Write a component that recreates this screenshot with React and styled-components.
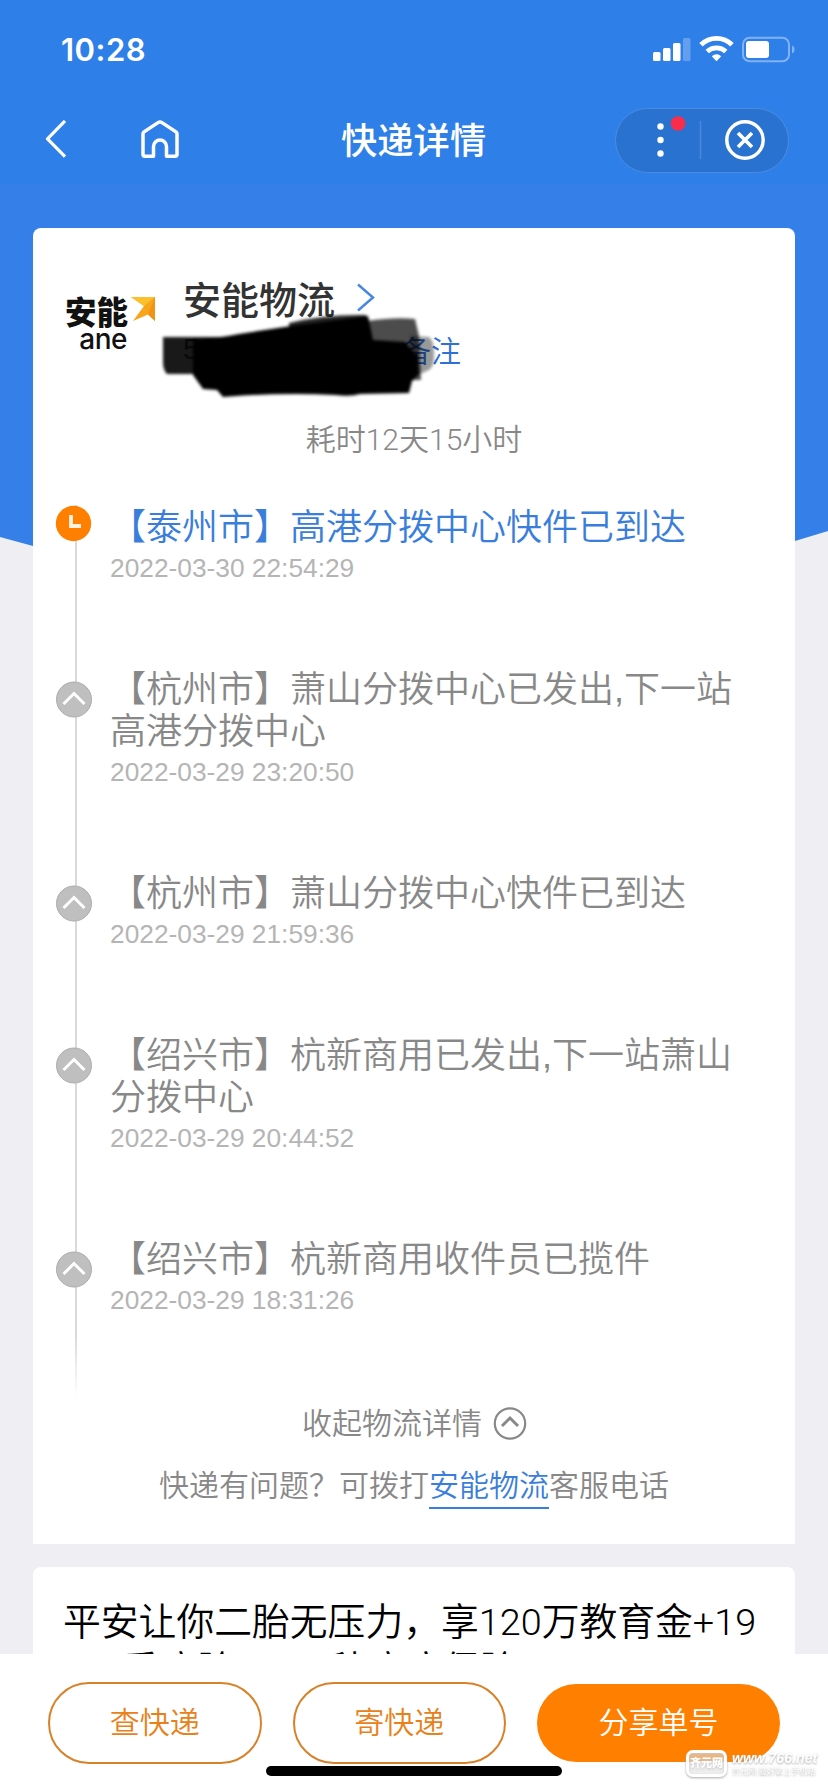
import React from "react";

import styled, { createGlobalStyle, css } from "styled-components";

const GlobalStyle = createGlobalStyle`
  * {
    box-sizing: border-box;
  }
  body {
    margin: 0;
    background-color: #eeeef3;
    font-family: "Liberation Sans", "Noto Sans CJK SC", sans-serif;
    font-weight: 350;
  }
`;
const Page = styled.div`
  position: relative;
  isolation: isolate;
  display: flex;
  flex-direction: column;
  width: 828px;
  height: 1792px;
  overflow: hidden;
`;
const Backdrop = styled.div`
  position: absolute;
  z-index: -1;
  top: 0;
  left: 0;
  width: 100%;
  height: 620px;
  background: linear-gradient(#2f7fe8 184px, #3480e8 184px);
  clip-path: polygon(0 0, 100% 0, 100% 531px, 795px 541px, 414px 620px, 33px 546px, 0 537px);
`;
const StatusBar = styled.div`
  display: flex;
  justify-content: space-between;
  align-items: center;
  height: 98px;
  padding: 0 32px 0 61px;
`;
const Clock = styled.div`
  color: white;
  font-family: Inter, sans-serif;
  font-size: 31px;
  font-weight: 600;
  line-height: 40px;
  letter-spacing: 0.5px;
  padding-top: 2px;
`;
const NavBar = styled.div`
  display: grid;
  grid-template-columns: 1fr 146px 1fr;
  align-items: center;
  height: 84px;
  padding: 0 39px 0 45px;
`;
const NavLeft = styled.div`
  display: flex;
  align-items: center;
  gap: 74px;
`;
const Title = styled.div`
  margin-left: -3px;
  padding-top: 4px;
  color: white;
  font-size: 36.3px;
  font-weight: 500;
  line-height: 48px;
  white-space: nowrap;
`;
const Capsule = styled.div`
  justify-self: end;
  display: flex;
  justify-content: flex-end;
  width: 174px;
  height: 65px;
  border-radius: 33px;
  border: 1px solid #4a8ce2;
  background-color: #2a72cf;
`;
const Card = styled.div`
  margin: ${(props) => props.$top}px 33px 0;
  height: ${(props) => props.$height}px;
  flex-shrink: 0;
  background-color: white;
  border-radius: 8px 8px 0 0;
  overflow: hidden;
`;
const Company = styled.div`
  display: flex;
  height: 190px;
  padding: 44px 0 0 32px;
`;
const Logo = styled.div`
  width: 118px;
  padding-top: 25px;
  color: #111;
`;
const LogoTop = styled.div`
  display: flex;
  gap: 3px;
  height: 32px;
`;
const LogoName = styled.div`
  font-size: 31.5px;
  font-weight: 900;
  line-height: 33px;
`;
const LogoLatin = styled.div`
  width: 62px;
  font-family: Inter, sans-serif;
  font-size: 28px;
  font-weight: 500;
  line-height: 20px;
  letter-spacing: -0.5px;
  text-align: right;
`;
const CompanyInfo = styled.div`
  position: relative;
  display: flex;
  flex-direction: column;
  gap: 4px;
`;
const CompanyName = styled.div`
  display: flex;
  align-items: center;
  gap: 21px;
  height: 50px;
  color: #333;
  font-size: 38px;
  font-weight: 500;
`;
const TrackingRow = styled.div`
  display: flex;
  justify-content: space-between;
  width: 278px;
  height: 46px;
  align-items: center;
  color: #555;
  font-size: 30px;
`;
const Remark = styled.span`
  color: #2c70d8;
`;
const Scribble = styled.svg`
  position: absolute;
  left: -28px;
  top: 32px;
`;
const Duration = styled.div`
  height: 87px;
  line-height: 44px;
  color: #888;
  font-family: Roboto, "Noto Sans CJK SC", sans-serif;
  font-size: 30px;
  text-align: center;
`;
const Timeline = styled.div`
  padding-left: 22px;
`;
const Item = styled.div`
  display: flex;
  padding-bottom: 78px;
  background: linear-gradient(#d9d9db, #d9d9db) 20px 0 / 2px 100% no-repeat;
  ${(props) =>
    props.$last &&
    css`
      background: linear-gradient(#d9d9db 60%, transparent) 20px 0 / 2px 100%
        no-repeat;
    `}
`;
const Marker = styled.div`
  width: 55px;
  padding-top: ${(props) => (props.$active ? 0 : 14)}px;
`;
const Step = styled.div`
  padding-top: 2px;
  margin-bottom: -2px;
  color: ${(props) => (props.$active ? "#3a7edc" : "#888")};
  font-size: 36px;
  line-height: 42px;
  white-space: pre-line;
`;
const Time = styled.div`
  color: #b5b5b5;
  font-size: 26.3px;
  line-height: 42px;
`;
const Collapse = styled.div`
  display: flex;
  justify-content: center;
  align-items: center;
  gap: 11px;
  height: 48px;
  padding-left: 1px;
  color: #888;
  font-size: 30px;
`;
const CollapseLabel = styled.span`
  padding-bottom: 5px;
`;
const Help = styled.div`
  padding-top: 18px;
  color: #888;
  font-size: 30px;
  line-height: 42px;
  text-align: center;
`;
const Phone = styled.span`
  display: inline-block;
  height: 44px;
  color: #3a7edc;
  border-bottom: 2px solid #3a7edc;
`;
const Ad = styled.div`
  padding: 31px 30px 0 30px;
  color: #000;
  font-family: Roboto, "Noto Sans CJK SC", sans-serif;
  font-size: 37.8px;
  line-height: 48px;
  white-space: pre;
`;
const Footer = styled.div`
  position: relative;
  display: flex;
  gap: 31px;
  height: 138px;
  flex-shrink: 0;
  padding: 28px 48px 0;
  background-color: white;
`;
const Button = styled.div`
  width: 213.5px;
  height: 82px;
  border: 2px solid #d98128;
  border-radius: 41px;
  color: #e8811a;
  font-size: 30px;
  line-height: 78px;
  text-align: center;
  ${(props) =>
    props.$primary &&
    css`
      width: 243px;
      height: 78px;
      margin-top: 2px;
      border: none;
      background-color: #ff7f00;
      color: white;
    `}
`;
const HomeIndicator = styled.div`
  position: absolute;
  left: 266px;
  bottom: 16px;
  width: 296px;
  height: 10px;
  border-radius: 5px;
  background-color: black;
`;
const Watermark = styled.div`
  position: absolute;
  left: 686px;
  top: 96px;
  display: flex;
  gap: 5px;
  color: white;
  filter: drop-shadow(0 1px 1px #aaa);
`;
const Bubble = styled.div`
  width: 41px;
  height: 27px;
  border: 3px solid white;
  border-radius: 7px;
  background-color: #ffffff55;
  font-size: 11px;
  font-weight: 900;
  line-height: 20px;
  text-align: center;
  white-space: nowrap;
`;
const Site = styled.div`
  width: 88px;
  font-size: 14px;
  font-style: italic;
  font-weight: 700;
  line-height: 16px;
  letter-spacing: 0.1px;
  white-space: nowrap;
`;
const SiteNote = styled.div`
  font-size: 8px;
  font-weight: 400;
  font-style: normal;
  line-height: 12px;
`;

const steps = [
  {
    text: "【泰州市】高港分拨中心快件已到达",
    time: "2022-03-30 22:54:29",
    active: true,
  },
  {
    text: "【杭州市】萧山分拨中心已发出,下一站\n高港分拨中心",
    time: "2022-03-29 23:20:50",
  },
  {
    text: "【杭州市】萧山分拨中心快件已到达",
    time: "2022-03-29 21:59:36",
  },
  {
    text: "【绍兴市】杭新商用已发出,下一站萧山\n分拨中心",
    time: "2022-03-29 20:44:52",
  },
  {
    text: "【绍兴市】杭新商用收件员已揽件",
    time: "2022-03-29 18:31:26",
  },
];

const StatusIcons = () => (
  <svg width="144" height="28" viewBox="0 0 144 28" fill="white">
    <rect x="1" y="17" width="7.5" height="9" rx="1.5" />
    <rect x="11" y="13" width="7.5" height="13" rx="1.5" />
    <rect x="21" y="8" width="7.5" height="18" rx="1.5" />
    <rect x="31" y="3" width="7.5" height="23" rx="1.5" opacity="0.25" />
    <g fill="none" stroke="white" strokeWidth="4.8">
      <path d="M49 9.8a22 22 0 0 1 31 0" />
      <path d="M55.2 16.5a13.5 13.5 0 0 1 18.6 0" />
    </g>
    <path d="M59.8 21.2a6.8 6.8 0 0 1 9.4 0L64.5 26.2z" />
    <rect x="91" y="2.8" width="46" height="23.4" rx="6.5" fill="none" stroke="#82b2f1" strokeWidth="2" />
    <rect x="94" y="6" width="23" height="17" rx="3" />
    <path d="M140 10.5v8c3.4-1.2 3.4-6.8 0-8z" fill="#82b2f1" />
  </svg>
);

const BackIcon = () => (
  <svg width="22" height="40" viewBox="0 0 22 40" fill="none" stroke="white" strokeWidth="3.2">
    <path d="M20 1L2.5 18.8L20 36.6" strokeLinejoin="round" />
  </svg>
);

const HomeIcon = () => (
  <svg width="38" height="40" viewBox="0 0 38 40" fill="none" stroke="white" strokeWidth="3.5" strokeLinejoin="round">
    <path d="M2 14Q2 12.6 3 11.9L17 2.6Q19 1.3 21 2.6L35 11.9Q36 12.6 36 14V34.5Q36 36.2 34.3 36.2H25.5V26.5a6.5 6.5 0 0 0-13 0V36.2H3.7Q2 36.2 2 34.5z" />
  </svg>
);

const CapsuleIcons = () => (
  <svg width="171" height="62" viewBox="0 0 171 62">
    <g fill="white">
      <circle cx="43.5" cy="17.5" r="3.2" />
      <circle cx="43.5" cy="31" r="3.2" />
      <circle cx="43.5" cy="44.5" r="3.2" />
    </g>
    <circle cx="61" cy="14.5" r="7.3" fill="#f92d4b" />
    <path d="M83.5 12v38" stroke="#4a88dc" strokeWidth="1.5" />
    <g fill="none" stroke="white" strokeWidth="3.5">
      <circle cx="128" cy="31" r="18.2" />
      <path d="M121 24l14 14M135 24l-14 14" strokeWidth="3.6" />
    </g>
  </svg>
);

const LogoArrow = () => (
  <svg width="25" height="26" viewBox="0 0 25 26">
    <path d="M0 0H24V24L17 17.5L2 24L13 9z" fill="#f9a51a" />
    <path d="M0 0H24L13 9z" fill="#fcc02c" />
    <path d="M24 0V24L17 17.5z" fill="#ef9416" />
  </svg>
);

const ActiveMarker = () => (
  <svg width="37" height="37" viewBox="0 0 37 37">
    <circle cx="18.5" cy="18.5" r="17.7" fill="#ff7f00" />
    <path d="M16 10V21H26" fill="none" stroke="#fff3e0" strokeWidth="3.8" />
  </svg>
);

const StepMarker = () => (
  <svg width="38" height="38" viewBox="0 0 38 38">
    <circle cx="19" cy="18.5" r="17.5" fill="#bfbfbf" stroke="#adadad" />
    <path d="M8.5 23L19 12.5L29.5 23" fill="none" stroke="white" strokeWidth="3" />
  </svg>
);

const Redaction = () => (
  <Scribble width="296" height="100" viewBox="0 0 296 100">
    <defs>
      <filter id="soft" x="-5%" y="-10%" width="110%" height="120%">
        <feGaussianBlur stdDeviation="1.8" />
      </filter>
    </defs>
    <g filter="url(#soft)">
      <path d="M212 17Q240 13 260 15L264 32L266 76H216z" opacity="0.7" />
      <path d="M255 32L274 33Q279 36 279 50Q280 64 272 67L255 74z" opacity="0.4" />
      <path d="M8 33H76L80 70H12Q8 66 8 58z" opacity="0.9" />
      <path d="M134 19Q170 10 211 11L216 38H134z" opacity="0.85" />
      <path d="M38 35Q60 35 84 30L136 22L213 12L218 36L250 38L262 52L264 70L257 77L254 89L205 90Q196 93 180 91Q130 88 68 93L62 86L48 85L38 71z" />
    </g>
  </Scribble>
);

const App = () => {
  return (
    <Page>
      <GlobalStyle />
      <Backdrop />
      <StatusBar>
        <Clock>10:28</Clock>
        <StatusIcons />
      </StatusBar>
      <NavBar>
        <NavLeft>
          <BackIcon />
          <HomeIcon />
        </NavLeft>
        <Title>快递详情</Title>
        <Capsule>
          <CapsuleIcons />
        </Capsule>
      </NavBar>
      <Card $top={46} $height={1316}>
        <Company>
          <Logo>
            <LogoTop>
              <LogoName>安能</LogoName>
              <LogoArrow />
            </LogoTop>
            <LogoLatin>ane</LogoLatin>
          </Logo>
          <CompanyInfo>
            <CompanyName>
              安能物流
              <svg width="20" height="30" viewBox="0 0 20 30" fill="none" stroke="#4a88e0" strokeWidth="2.5">
                <path d="M2 2.5L17 15.5L2 28.5" />
              </svg>
            </CompanyName>
            <TrackingRow>
              <span>50</span>
              <Remark>备注</Remark>
            </TrackingRow>
            <Redaction />
          </CompanyInfo>
        </Company>
        <Duration>耗时12天15小时</Duration>
        <Timeline>
          {steps.map((item, i) => (
            <Item key={item.time} $last={i === steps.length - 1}>
              <Marker $active={item.active}>
                {item.active ? <ActiveMarker /> : <StepMarker />}
              </Marker>
              <div>
                <Step $active={item.active}>{item.text}</Step>
                <Time>{item.time}</Time>
              </div>
            </Item>
          ))}
        </Timeline>
        <Collapse>
          <CollapseLabel>收起物流详情</CollapseLabel>
          <svg width="34" height="34" viewBox="0 0 34 34" fill="none" stroke="#888" strokeWidth="2.2">
            <circle cx="17" cy="17.5" r="15.2" />
            <path d="M9 20L17 12L25 20" strokeWidth="3" />
          </svg>
        </Collapse>
        <Help>
          快递有问题？可拨打<Phone>安能物流</Phone>客服电话
        </Help>
      </Card>
      <Card $top={23} $height={87}>
        <Ad>{"平安让你二胎无压力，享120万教育金+19\n0万重疾险+120 种疾病保险"}</Ad>
      </Card>
      <Footer>
        <Button>查快递</Button>
        <Button>寄快递</Button>
        <Button $primary>分享单号</Button>
        <HomeIndicator />
        <Watermark>
          <Bubble>齐元网</Bubble>
          <Site>
            www.766.net
            <SiteNote>齐元网 最好掌上手机站</SiteNote>
          </Site>
        </Watermark>
      </Footer>
    </Page>
  );
};

export default App;
